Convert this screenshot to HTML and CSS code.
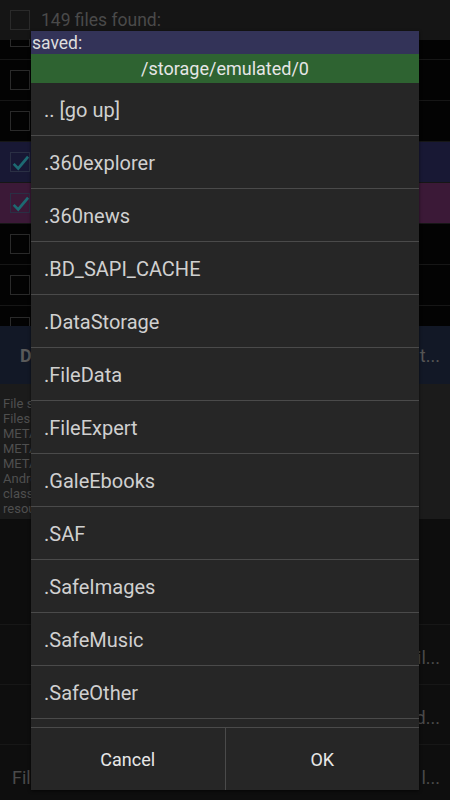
FILE: index.html
```html
<!DOCTYPE html>
<html>
<head>
<meta charset="utf-8">
<link rel="stylesheet" href="styles.css">
</head>
<body>
<div class="screen">
  <div class="topbar">
    <span class="cb"></span>
    <span class="found">149 files found:</span>
  </div>
  <div class="rows">
    <div class="row partial"><span class="cb"></span></div>
    <div class="row"><span class="cb"></span></div>
    <div class="row"><span class="cb"></span></div>
    <div class="row sel-blue"><span class="cb checked"><svg viewBox="0 0 20 20" width="20" height="20"><path d="M3 11 L8 16 L19 3" fill="none" stroke="#1d6a72" stroke-width="3"/></svg></span></div>
    <div class="row sel-pink"><span class="cb checked"><svg viewBox="0 0 20 20" width="20" height="20"><path d="M3 11 L8 16 L19 3" fill="none" stroke="#1d6a72" stroke-width="3"/></svg></span></div>
    <div class="row"><span class="cb"></span></div>
    <div class="row"><span class="cb"></span></div>
    <div class="row cut"><span class="cb"></span></div>
  </div>
  <div class="actionbar">
    <span class="act-left">D</span>
    <span class="act-right">t...</span>
  </div>
  <div class="info">
    <div>File s</div>
    <div>Files</div>
    <div>META</div>
    <div>META</div>
    <div>META</div>
    <div>Andro</div>
    <div>class</div>
    <div>resou</div>
  </div>
  <div class="empty"></div>
  <div class="bottomrows">
    <div class="brow"><span></span><span class="tail">il...</span></div>
    <div class="brow"><span></span><span class="tail">d...</span></div>
    <div class="brow"><span class="head">Fil</span><span class="tail">l...</span></div>
  </div>

  <div class="dialog">
    <div class="title">saved:</div>
    <div class="path">/storage/emulated/0</div>
    <div class="list">
      <div class="item">.. [go up]</div>
      <div class="item">.360explorer</div>
      <div class="item">.360news</div>
      <div class="item">.BD_SAPI_CACHE</div>
      <div class="item">.DataStorage</div>
      <div class="item">.FileData</div>
      <div class="item">.FileExpert</div>
      <div class="item">.GaleEbooks</div>
      <div class="item">.SAF</div>
      <div class="item">.SafeImages</div>
      <div class="item">.SafeMusic</div>
      <div class="item">.SafeOther</div>
      <div class="item sliver"></div>
    </div>
    <div class="buttons">
      <div class="btn">Cancel</div>
      <div class="btn">OK</div>
    </div>
  </div>
</div>
</body>
</html>
```

FILE: styles.css
```css
* { box-sizing: border-box; }
html, body { margin: 0; padding: 0; }
body {
  width: 450px;
  height: 800px;
  overflow: hidden;
  background: #0b0b0b;
  font-family: Roboto, "Noto Sans", sans-serif;
}
.screen {
  position: relative;
  width: 450px;
  height: 800px;
  display: flex;
  flex-direction: column;
  overflow: hidden;
}
.topbar {
  height: 40px;
  background: #151515;
  display: flex;
  align-items: center;
  padding-left: 10px;
  gap: 11px;
  flex: none;
}
.cb {
  width: 20px;
  height: 20px;
  border: 1px solid #2a2a2a;
  flex: none;
  display: flex;
}
.cb.checked { border-color: #2a2f44; }
.found {
  color: #4a4a4a;
  font-size: 17.5px;
}
.rows { display: flex; flex-direction: column; flex: none; }
.row {
  height: 41px;
  background: #030303;
  border-bottom: 1px solid #161616;
  display: flex;
  align-items: center;
  padding-left: 10px;
}
.row.partial { height: 20px; align-items: flex-end; padding-bottom: 12px; }
.row.partial .cb { height: 8px; border-top: none; }
.row.sel-blue { background: #181834; }
.row.sel-pink { background: #3b1937; }
.row.cut { height: 20px; align-items: flex-start; padding-top: 11px; border-bottom: none; }
.row.cut .cb { height: 9px; border-bottom: none; }
.actionbar {
  height: 58px;
  flex: none;
  background: #121826;
  display: flex;
  align-items: center;
  justify-content: space-between;
  padding: 0 10px 0 20px;
  color: #5a5a5a;
  font-size: 18px;
}
.act-left { font-weight: bold; }
.act-right { color: #555; }
.info {
  flex: none;
  height: 135px;
  background: #1b1b1b;
  color: #4f4f4f;
  font-size: 13px;
  line-height: 15px;
  padding: 12px 3px 0;
}
.empty { height: 105px; flex: none; background: #0d0d0d; }
.bottomrows { flex: 1; display: flex; flex-direction: column; background: #0e0e0e; }
.brow {
  height: 60px;
  border-top: 1px solid #171717;
  display: flex;
  align-items: center;
  justify-content: space-between;
  padding: 6px 10px 0 12px;
  color: #4a4a4a;
  font-size: 18px;
}

/* dialog */
.dialog {
  position: absolute;
  left: 31px;
  top: 31px;
  width: 388px;
  height: 759px;
  background: #262626;
  display: flex;
  flex-direction: column;
  box-shadow: 0 1px 3px rgba(0,0,0,0.6);
}
.title {
  height: 23px;
  background: #333358;
  color: #dedede;
  font-size: 17.5px;
  line-height: 23px;
  padding-left: 1px;
  padding-top: 1px;
  flex: none;
}
.path {
  height: 29px;
  background: #2e6331;
  color: #e6e6e6;
  font-size: 18px;
  display: flex;
  align-items: center;
  justify-content: center;
  flex: none;
}
.list { flex: none; display: flex; flex-direction: column; }
.item {
  height: 53px;
  border-bottom: 1px solid #4a4a4a;
  color: #d0d0d0;
  font-size: 20px;
  display: flex;
  align-items: center;
  padding-left: 13px;
  padding-top: 2px;
}
.item.sliver { height: 8px; border-bottom: none; padding-top: 0; }
.buttons {
  flex: 1;
  display: flex;
  border-top: 1px solid #4a4a4a;
}
.btn {
  flex: 1;
  display: flex;
  align-items: center;
  justify-content: center;
  color: #e8e8e8;
  font-size: 18px;
}
.btn + .btn { border-left: 1px solid #4a4a4a; }
```
